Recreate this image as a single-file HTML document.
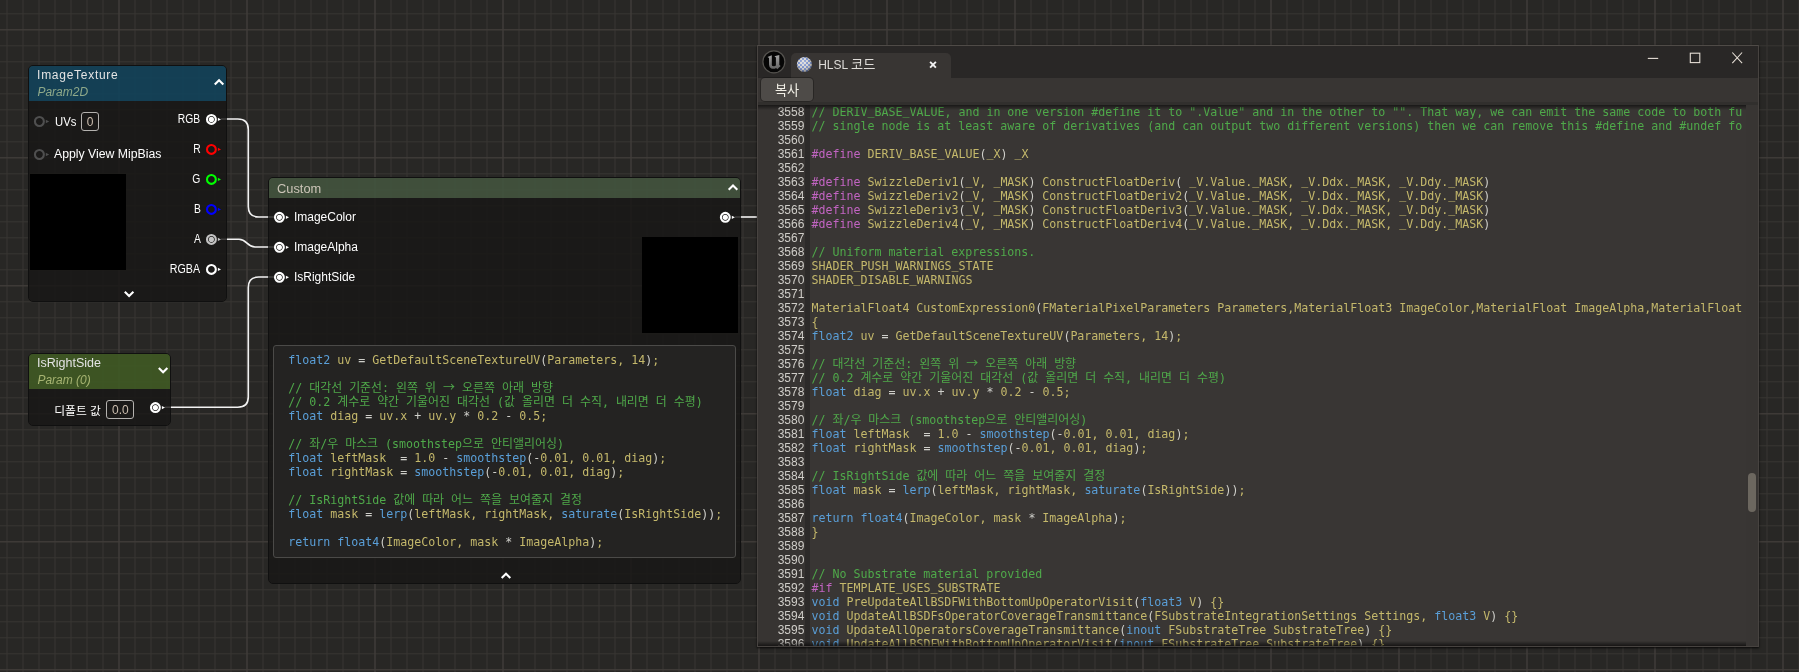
<!DOCTYPE html>
<html lang="ko">
<head>
<meta charset="utf-8">
<title>HLSL 코드</title>
<style>
html,body{margin:0;padding:0;}
body{width:1799px;height:672px;overflow:hidden;position:relative;background:#282725;
  font-family:"Liberation Sans","Noto Sans CJK KR",sans-serif;font-size:12px;line-height:14px;color:#fff;}
#grid{position:absolute;left:0;top:0;width:1799px;height:672px;}
#ov{position:absolute;left:0;top:0;width:1799px;height:672px;pointer-events:none;}
#wires{position:absolute;left:0;top:0;width:1799px;height:672px;pointer-events:none;}
.node{will-change:transform;position:absolute;box-sizing:border-box;border:1px solid #101010;border-radius:5px;overflow:hidden;}
.bd{position:absolute;left:0;right:0;bottom:0;background:rgba(24,23,22,0.84);}
.hdr{position:absolute;left:0;top:0;right:0;}
.t{position:absolute;white-space:nowrap;line-height:14px;font-size:12px;transform-origin:0 50%;}
.r{transform-origin:100% 50%;text-align:right;}
.i{font-style:italic;}
.pin{position:absolute;width:22px;height:14px;overflow:visible;}
.blk{position:absolute;background:#000;}
.vbox{position:absolute;box-sizing:border-box;border:1px solid #b4b2af;border-radius:3px;color:#cdbfb0;text-align:center;font-size:12px;line-height:16px;}
.chev{position:absolute;overflow:visible;}
.mono{font-family:"DejaVu Sans Mono","Liberation Mono","Noto Sans CJK KR",monospace;font-size:11.63px;line-height:14px;white-space:pre;color:#c4b86b;}
.mono .k{font-family:"Noto Sans CJK KR","NanumGothic",sans-serif;font-size:11.95px;line-height:0;}
.l{height:14px;}
.c{color:#4fa94a;}
.u{position:relative;top:-1px;}
.p{color:#c264c2;}
.b{color:#5a9fd8;}
.o{color:#cfcfca;}
#cbox{will-change:transform;position:absolute;left:273px;top:345px;width:463px;height:213px;box-sizing:border-box;border:1px solid #4b4a48;border-radius:3px;background:#242322;}
#cbox pre{position:absolute;left:14.2px;top:7.4px;margin:0;}
#win{will-change:transform;position:absolute;left:757px;top:45px;width:1002px;height:602px;box-sizing:border-box;border:1px solid #474340;border-top-color:#4f4b47;background:#383533;box-shadow:0 1px 2px 0 rgba(0,0,0,0.8);overflow:hidden;}
#tbar{position:absolute;left:0;top:0;width:1000px;height:32px;background:#292726;}
#tstrip{position:absolute;left:0;top:56px;width:1000px;height:3px;background:#312f2d;}
#tab{position:absolute;left:33px;top:7px;width:160px;height:26px;background:#383533;border-radius:5px 5px 0 0;}
#btn{position:absolute;left:2.6px;top:32.4px;width:52.9px;height:22.8px;background:#4e4b48;border-radius:4px;box-shadow:0 0 0 1px rgba(0,0,0,0.28);}
#codearea{position:absolute;left:0;top:59px;width:988px;height:541px;overflow:hidden;background:#393634;}
#gutter{position:absolute;left:0;top:0;width:47px;height:541px;background:#373432;}
#gdiv{position:absolute;left:47px;top:0;width:5px;height:541px;background:#2c2a29;}
#nums{position:absolute;left:0;top:0;width:46.4px;margin:0;text-align:right;font-family:"Liberation Sans",sans-serif;font-size:12px;line-height:14px;color:#cfcdc8;white-space:pre;}
#clip{position:absolute;left:0;top:0;width:983.5px;height:541px;overflow:hidden;}
#code{position:absolute;left:53.4px;top:0;margin:0;}
#shtop{position:absolute;left:0;top:0;width:988px;height:5px;background:linear-gradient(to bottom,rgba(0,0,0,0.55),rgba(0,0,0,0));}
#shbot{position:absolute;left:0;bottom:0;width:988px;height:5px;background:linear-gradient(to top,rgba(0,0,0,0.6),rgba(0,0,0,0));}
#thumb{position:absolute;left:990px;top:427px;width:8px;height:39px;border-radius:4px;background:#6c675f;}
</style>
</head>
<body>
<svg id="grid" width="1799" height="672" viewBox="0 0 1799 672">
  <defs>
    <pattern id="g1" x="6.5" y="13.3" width="16" height="16" patternUnits="userSpaceOnUse">
      <rect x="0" y="0" width="1" height="16" fill="#373532"/>
      <rect x="0" y="0" width="16" height="1" fill="#373532"/>
    </pattern>
    <pattern id="g2" x="118.5" y="29.3" width="128" height="128" patternUnits="userSpaceOnUse">
      <rect x="0" y="0" width="1" height="128" fill="#423e3b"/>
      <rect x="0" y="0" width="128" height="1" fill="#423e3b"/>
    </pattern>
  </defs>
  <rect width="1799" height="672" fill="url(#g1)"/>
  <rect width="1799" height="672" fill="url(#g2)"/>
</svg>

<svg id="wires" width="1799" height="672" viewBox="0 0 1799 672" fill="none" stroke="#f2f2f2" stroke-width="1.6" stroke-linecap="butt">
  <path d="M227 119 H237.8 Q248.3 119 248.3 129.5 V206.5 Q248.3 217 258.8 217 H268"/>
  <path d="M227 239.2 H239 C247 239.2 247 247 255 247 H268"/>
  <path d="M171 407.2 H237.8 Q248.3 407.2 248.3 396.7 V287.5 Q248.3 277 258.8 277 H268"/>
  <path d="M741 217 H757"/>
</svg>

<!-- ImageTexture node -->
<div class="node" style="left:28px;top:65px;width:199px;height:237px;">
  <div class="hdr" style="height:35px;background:rgba(18,66,90,0.9);"></div><div class="bd" style="top:35px;"></div>
  <span class="t" style="left:8.1px;top:1.9px;color:#e4e4e4;letter-spacing:0.72px;">ImageTexture</span>
  <span class="t i" style="left:8.4px;top:18.5px;color:#8fa98a;">Param2D</span>
  <span class="t" style="left:25.6px;top:48.5px;transform:scaleX(0.943);">UVs</span>
  <div class="vbox" style="left:52px;top:46px;width:18px;height:19px;line-height:18.6px;">0</div>
  <span class="t" style="left:24.9px;top:80.7px;transform:scaleX(1.022);">Apply View MipBias</span>

  <div class="blk" style="left:1px;top:108px;width:96px;height:96px;"></div>

  <span class="t r" style="right:25.9px;top:46.1px;transform:scaleX(0.858);">RGB</span>
  <span class="t r" style="right:25.2px;top:76.1px;transform:scaleX(0.86);">R</span>
  <span class="t r" style="right:25.2px;top:106.1px;transform:scaleX(0.86);">G</span>
  <span class="t r" style="right:25.2px;top:136.1px;transform:scaleX(0.86);">B</span>
  <span class="t r" style="right:25.2px;top:166.1px;transform:scaleX(0.86);">A</span>
  <span class="t r" style="right:25.9px;top:196.1px;transform:scaleX(0.89);">RGBA</span>
</div>

<!-- IsRightSide node -->
<div class="node" style="left:28px;top:353px;width:143px;height:73px;">
  <div class="hdr" style="height:35px;background:rgba(63,90,36,0.9);"></div><div class="bd" style="top:35px;"></div>
  <span class="t" style="left:8.4px;top:1.8px;color:#e4e4e4;transform:scaleX(1.042);">IsRightSide</span>
  <span class="t i" style="left:8.4px;top:18.7px;color:#a7b472;">Param (0)</span>
  <span class="t" style="left:25.2px;top:50.3px;font-size:11.8px;">디폴트 값</span>
  <div class="vbox" style="left:76.5px;top:46px;width:28px;height:19px;line-height:18.8px;padding-left:1.6px;">0.0</div>
</div>

<!-- Custom node -->
<div class="node" style="left:268px;top:177px;width:473px;height:407px;">
  <div class="hdr" style="height:20px;background:rgba(66,84,62,0.9);"></div><div class="bd" style="top:20px;"></div>
  <span class="t" style="left:8.3px;top:3.6px;color:#cdc5b8;transform:scaleX(1.07);">Custom</span>
  <span class="t" style="left:24.9px;top:31.8px;">ImageColor</span>
  <span class="t" style="left:24.9px;top:61.8px;">ImageAlpha</span>
  <span class="t" style="left:24.9px;top:91.8px;">IsRightSide</span>
  <div class="blk" style="left:373px;top:59px;width:96px;height:96px;"></div>
</div>
<svg id="ov" width="1799" height="672" viewBox="0 0 1799 672">
<g stroke="#484746" stroke-width="1.3" fill="none"><path d="M220.8 119 H227"/><path d="M220.8 239.2 H227"/><path d="M164.8 407.2 H171"/><path d="M268 217 H274"/><path d="M268 247 H274"/><path d="M268 277 H274"/><path d="M734.8 217 H741"/></g>
<g transform="translate(39.4 121.5)"><circle r="4.45" fill="none" stroke="#4f4f4f" stroke-width="2.1"/><path d="M6.4 -1.8 L9.8 0 L6.4 1.8Z" fill="#4f4f4f"/></g>
<g transform="translate(39.4 154.5)"><circle r="4.45" fill="none" stroke="#4f4f4f" stroke-width="2.1"/><path d="M6.4 -1.8 L9.8 0 L6.4 1.8Z" fill="#4f4f4f"/></g>
<g transform="translate(211.4 119.45)"><circle r="4.4" fill="none" stroke="#ffffff" stroke-width="2.1"/><circle r="2.6" fill="#ffffff"/><path d="M6.5 -1.6 L9.6 0 L6.5 1.6Z" fill="#ffffff"/></g>
<g transform="translate(211.4 149.45)"><circle r="4.4" fill="none" stroke="#ff0000" stroke-width="2.1"/><path d="M6.5 -1.6 L9.6 0 L6.5 1.6Z" fill="#ff0000"/></g>
<g transform="translate(211.4 179.45)"><circle r="4.4" fill="none" stroke="#00ff00" stroke-width="2.1"/><path d="M6.5 -1.6 L9.6 0 L6.5 1.6Z" fill="#00ff00"/></g>
<g transform="translate(211.4 209.45)"><circle r="4.4" fill="none" stroke="#0000ff" stroke-width="2.1"/><path d="M6.5 -1.6 L9.6 0 L6.5 1.6Z" fill="#0000ff"/></g>
<g transform="translate(211.4 239.45)"><circle r="4.4" fill="none" stroke="#c4c4c4" stroke-width="2.1"/><circle r="2.6" fill="#c4c4c4"/><path d="M6.5 -1.6 L9.6 0 L6.5 1.6Z" fill="#c4c4c4"/></g>
<g transform="translate(211.4 269.45)"><circle r="4.4" fill="none" stroke="#ffffff" stroke-width="2.1"/><path d="M6.5 -1.6 L9.6 0 L6.5 1.6Z" fill="#ffffff"/></g>
<g transform="translate(155.4 407.55)"><circle r="4.4" fill="none" stroke="#ffffff" stroke-width="2.1"/><circle r="2.6" fill="#ffffff"/><path d="M6.5 -1.6 L9.6 0 L6.5 1.6Z" fill="#ffffff"/></g>
<g transform="translate(279.4 217.3)"><circle r="4.4" fill="none" stroke="#ffffff" stroke-width="2.1"/><circle r="2.6" fill="#ffffff"/><path d="M6.5 -1.6 L9.6 0 L6.5 1.6Z" fill="#ffffff"/></g>
<g transform="translate(279.4 247.3)"><circle r="4.4" fill="none" stroke="#ffffff" stroke-width="2.1"/><circle r="2.6" fill="#ffffff"/><path d="M6.5 -1.6 L9.6 0 L6.5 1.6Z" fill="#ffffff"/></g>
<g transform="translate(279.4 277.3)"><circle r="4.4" fill="none" stroke="#ffffff" stroke-width="2.1"/><circle r="2.6" fill="#ffffff"/><path d="M6.5 -1.6 L9.6 0 L6.5 1.6Z" fill="#ffffff"/></g>
<g transform="translate(725.3 217.3)"><circle r="4.4" fill="none" stroke="#ffffff" stroke-width="2.1"/><circle r="2.6" fill="#ffffff"/><path d="M6.5 -1.6 L9.6 0 L6.5 1.6Z" fill="#ffffff"/></g>
<path d="M214.75 84.45 L219.05 80.15 L223.35 84.45" fill="none" stroke="#fff" stroke-width="2.1"/>
<path d="M124.8 291.8 L129.1 296.1 L133.4 291.8" fill="none" stroke="#fff" stroke-width="2.1"/>
<path d="M158.8 368 L163.1 372.3 L167.4 368" fill="none" stroke="#fff" stroke-width="2.1"/>
<path d="M728.7 189.75 L733 185.45 L737.3 189.75" fill="none" stroke="#fff" stroke-width="2.1"/>
<path d="M501.7 577.95 L506 573.65 L510.3 577.95" fill="none" stroke="#fff" stroke-width="2.1"/>
</svg>
<div id="cbox"><pre class="mono"><div class="l"><span class="b">float2</span> uv <span class="o">=</span> GetDefaultSceneTextureUV<span class="o">(</span>Parameters, 14<span class="o">)</span>;</div><div class="l"></div><div class="l"><span class="c">// <span class="k">대각선</span> <span class="k">기준선</span>: <span class="k">왼쪽</span> <span class="k">위</span> <span class="k">→</span> <span class="k">오른쪽</span> <span class="k">아래</span> <span class="k">방향</span></span></div><div class="l"><span class="c">// 0.2 <span class="k">계수로</span> <span class="k">약간</span> <span class="k">기울어진</span> <span class="k">대각선</span> (<span class="k">값</span> <span class="k">올리면</span> <span class="k">더</span> <span class="k">수직</span>, <span class="k">내리면</span> <span class="k">더</span> <span class="k">수평</span>)</span></div><div class="l"><span class="b">float</span> diag <span class="o">=</span> uv.x <span class="o">+</span> uv.y <span class="o">*</span> 0.2 <span class="o">-</span> 0.5;</div><div class="l"></div><div class="l"><span class="c">// <span class="k">좌</span>/<span class="k">우</span> <span class="k">마스크</span> (smoothstep<span class="k">으로</span> <span class="k">안티앨리어싱</span>)</span></div><div class="l"><span class="b">float</span> leftMask  <span class="o">=</span> 1.0 <span class="o">-</span> <span class="b">smoothstep</span><span class="o">(</span><span class="o">-</span>0.01, 0.01, diag<span class="o">)</span>;</div><div class="l"><span class="b">float</span> rightMask <span class="o">=</span> <span class="b">smoothstep</span><span class="o">(</span><span class="o">-</span>0.01, 0.01, diag<span class="o">)</span>;</div><div class="l"></div><div class="l"><span class="c">// IsRightSide <span class="k">값에</span> <span class="k">따라</span> <span class="k">어느</span> <span class="k">쪽을</span> <span class="k">보여줄지</span> <span class="k">결정</span></span></div><div class="l"><span class="b">float</span> mask <span class="o">=</span> <span class="b">lerp</span><span class="o">(</span>leftMask, rightMask, <span class="b">saturate</span><span class="o">(</span>IsRightSide<span class="o">)</span><span class="o">)</span>;</div><div class="l"></div><div class="l"><span class="b">return</span> <span class="b">float4</span><span class="o">(</span>ImageColor, mask <span class="o">*</span> ImageAlpha<span class="o">)</span>;</div></pre></div>

<!-- HLSL window -->
<div id="win">
  <div id="tbar"></div>
  <div id="tab"></div>
  <div id="tstrip"></div>
  <div id="btn"></div>
  <svg style="position:absolute;left:0;top:0;" width="1000" height="60" viewBox="0 0 1000 60">
    <defs>
      <pattern id="chk" x="-0.4" y="-0.5" width="4" height="4" patternUnits="userSpaceOnUse"><rect width="4" height="4" fill="#d2d0ce"/><rect width="2" height="2" fill="#6f88c6"/><rect x="2" y="2" width="2" height="2" fill="#6f88c6"/></pattern>
      <radialGradient id="sph" cx="0.42" cy="0.36" r="0.66"><stop offset="0" stop-color="#ffffff" stop-opacity="0.45"/><stop offset="0.5" stop-color="#ffffff" stop-opacity="0.08"/><stop offset="1" stop-color="#000000" stop-opacity="0.5"/></radialGradient>
      <linearGradient id="ug" x1="0" y1="0" x2="0" y2="1"><stop offset="0" stop-color="#a6a6a6"/><stop offset="1" stop-color="#606060"/></linearGradient>
    </defs>
    <g transform="translate(15.9 15.8)">
      <circle r="11" fill="#060606" stroke="#55534f" stroke-width="1.2"/>
      <path d="M-6.4 -4.9 L-2.1 -6.5 L-2.1 3.1 Q-2.1 4.5 0 4.5 Q2 4.5 2 3.1 L2 -4.4 L0.5 -5.5 L5.4 -6.8 L5.4 3.3 L6.7 4.3 L3.4 7.5 L2.2 6.2 Q0 7.7 -2.7 6.6 Q-4.9 5.6 -4.9 3 L-4.9 -3.7 Z" fill="url(#ug)"/>
    </g>
    <g transform="translate(46.4 18.5)"><circle r="7.5" fill="url(#chk)"/><circle r="7.5" fill="url(#sph)"/></g>
    <path d="M172.1 15.8 L177.9 21.6 M177.9 15.8 L172.1 21.6" stroke="#f2f2f2" stroke-width="1.9" fill="none"/>
    <g fill="none" stroke="#e6dfd6" stroke-width="1.1">
      <path d="M889.8 12.4 H900.2"/>
      <rect x="932.3" y="7.2" width="9.5" height="9.4"/>
      <path d="M974.3 6.5 L984.1 17.1 M984.1 6.5 L974.3 17.1"/>
    </g>
  </svg>
  <span class="t" style="left:60.2px;top:12.3px;color:#dedcd8;">HLSL <span style="font-size:13.2px;line-height:0;">코드</span></span>
  <span class="t" style="left:16.9px;top:38.3px;color:#f1efe6;font-size:13.2px;">복사</span>
  <div id="codearea">
    <div id="gutter"></div><div id="gdiv"></div>
    <pre id="nums" style="top:-0.4px;">3558
3559
3560
3561
3562
3563
3564
3565
3566
3567
3568
3569
3570
3571
3572
3573
3574
3575
3576
3577
3578
3579
3580
3581
3582
3583
3584
3585
3586
3587
3588
3589
3590
3591
3592
3593
3594
3595
3596</pre>
    <div id="clip"><pre id="code" class="mono" style="top:-0.4px;"><div class="l"><span class="c">// DERIV<span class="u">_</span>BASE<span class="u">_</span>VALUE, and in one version #define it to ".Value" and in the other to "". That way, we can emit the same code to both functions</span></div><div class="l"><span class="c">// single node is at least aware of derivatives (and can output two different versions) then we can remove this #define and #undef for</span></div><div class="l"></div><div class="l"><span class="p">#define</span> DERIV<span class="u">_</span>BASE<span class="u">_</span>VALUE<span class="o">(</span><span class="u">_</span>X<span class="o">)</span> <span class="u">_</span>X</div><div class="l"></div><div class="l"><span class="p">#define</span> SwizzleDeriv1<span class="o">(</span><span class="u">_</span>V, <span class="u">_</span>MASK<span class="o">)</span> ConstructFloatDeriv<span class="o">(</span> <span class="u">_</span>V.Value.<span class="u">_</span>MASK, <span class="u">_</span>V.Ddx.<span class="u">_</span>MASK, <span class="u">_</span>V.Ddy.<span class="u">_</span>MASK<span class="o">)</span></div><div class="l"><span class="p">#define</span> SwizzleDeriv2<span class="o">(</span><span class="u">_</span>V, <span class="u">_</span>MASK<span class="o">)</span> ConstructFloatDeriv2<span class="o">(</span><span class="u">_</span>V.Value.<span class="u">_</span>MASK, <span class="u">_</span>V.Ddx.<span class="u">_</span>MASK, <span class="u">_</span>V.Ddy.<span class="u">_</span>MASK<span class="o">)</span></div><div class="l"><span class="p">#define</span> SwizzleDeriv3<span class="o">(</span><span class="u">_</span>V, <span class="u">_</span>MASK<span class="o">)</span> ConstructFloatDeriv3<span class="o">(</span><span class="u">_</span>V.Value.<span class="u">_</span>MASK, <span class="u">_</span>V.Ddx.<span class="u">_</span>MASK, <span class="u">_</span>V.Ddy.<span class="u">_</span>MASK<span class="o">)</span></div><div class="l"><span class="p">#define</span> SwizzleDeriv4<span class="o">(</span><span class="u">_</span>V, <span class="u">_</span>MASK<span class="o">)</span> ConstructFloatDeriv4<span class="o">(</span><span class="u">_</span>V.Value.<span class="u">_</span>MASK, <span class="u">_</span>V.Ddx.<span class="u">_</span>MASK, <span class="u">_</span>V.Ddy.<span class="u">_</span>MASK<span class="o">)</span></div><div class="l"></div><div class="l"><span class="c">// Uniform material expressions.</span></div><div class="l">SHADER<span class="u">_</span>PUSH<span class="u">_</span>WARNINGS<span class="u">_</span>STATE</div><div class="l">SHADER<span class="u">_</span>DISABLE<span class="u">_</span>WARNINGS</div><div class="l"></div><div class="l">MaterialFloat4 CustomExpression0<span class="o">(</span>FMaterialPixelParameters Parameters,MaterialFloat3 ImageColor,MaterialFloat ImageAlpha,MaterialFloat IsRightSide<span class="o">)</span></div><div class="l">{</div><div class="l"><span class="b">float2</span> uv <span class="o">=</span> GetDefaultSceneTextureUV<span class="o">(</span>Parameters, 14<span class="o">)</span>;</div><div class="l"></div><div class="l"><span class="c">// <span class="k">대각선</span> <span class="k">기준선</span>: <span class="k">왼쪽</span> <span class="k">위</span> <span class="k">→</span> <span class="k">오른쪽</span> <span class="k">아래</span> <span class="k">방향</span></span></div><div class="l"><span class="c">// 0.2 <span class="k">계수로</span> <span class="k">약간</span> <span class="k">기울어진</span> <span class="k">대각선</span> (<span class="k">값</span> <span class="k">올리면</span> <span class="k">더</span> <span class="k">수직</span>, <span class="k">내리면</span> <span class="k">더</span> <span class="k">수평</span>)</span></div><div class="l"><span class="b">float</span> diag <span class="o">=</span> uv.x <span class="o">+</span> uv.y <span class="o">*</span> 0.2 <span class="o">-</span> 0.5;</div><div class="l"></div><div class="l"><span class="c">// <span class="k">좌</span>/<span class="k">우</span> <span class="k">마스크</span> (smoothstep<span class="k">으로</span> <span class="k">안티앨리어싱</span>)</span></div><div class="l"><span class="b">float</span> leftMask  <span class="o">=</span> 1.0 <span class="o">-</span> <span class="b">smoothstep</span><span class="o">(</span><span class="o">-</span>0.01, 0.01, diag<span class="o">)</span>;</div><div class="l"><span class="b">float</span> rightMask <span class="o">=</span> <span class="b">smoothstep</span><span class="o">(</span><span class="o">-</span>0.01, 0.01, diag<span class="o">)</span>;</div><div class="l"></div><div class="l"><span class="c">// IsRightSide <span class="k">값에</span> <span class="k">따라</span> <span class="k">어느</span> <span class="k">쪽을</span> <span class="k">보여줄지</span> <span class="k">결정</span></span></div><div class="l"><span class="b">float</span> mask <span class="o">=</span> <span class="b">lerp</span><span class="o">(</span>leftMask, rightMask, <span class="b">saturate</span><span class="o">(</span>IsRightSide<span class="o">)</span><span class="o">)</span>;</div><div class="l"></div><div class="l"><span class="b">return</span> <span class="b">float4</span><span class="o">(</span>ImageColor, mask <span class="o">*</span> ImageAlpha<span class="o">)</span>;</div><div class="l">}</div><div class="l"></div><div class="l"></div><div class="l"><span class="c">// No Substrate material provided</span></div><div class="l"><span class="p">#if</span> TEMPLATE<span class="u">_</span>USES<span class="u">_</span>SUBSTRATE</div><div class="l"><span class="b">void</span> PreUpdateAllBSDFWithBottomUpOperatorVisit<span class="o">(</span><span class="b">float3</span> V<span class="o">)</span> {}</div><div class="l"><span class="b">void</span> UpdateAllBSDFsOperatorCoverageTransmittance<span class="o">(</span>FSubstrateIntegrationSettings Settings, <span class="b">float3</span> V<span class="o">)</span> {}</div><div class="l"><span class="b">void</span> UpdateAllOperatorsCoverageTransmittance<span class="o">(</span><span class="b">inout</span> FSubstrateTree SubstrateTree<span class="o">)</span> {}</div><div class="l"><span class="b">void</span> UpdateAllBSDFWithBottomUpOperatorVisit<span class="o">(</span><span class="b">inout</span> FSubstrateTree SubstrateTree<span class="o">)</span> {}</div></pre></div>
    <div id="shtop"></div><div id="shbot"></div>
  </div>
  <div id="thumb"></div>
</div>
</body>
</html>
